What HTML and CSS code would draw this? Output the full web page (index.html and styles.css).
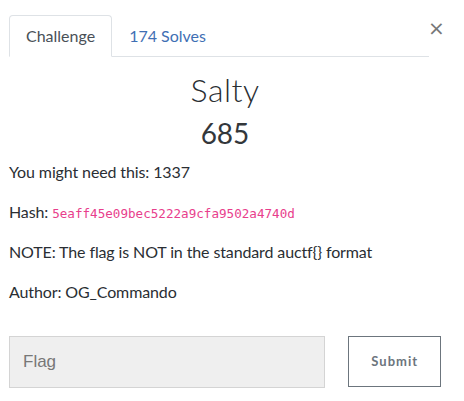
FILE: index.html
```html
<!DOCTYPE html>
<html>
<head>
<meta charset="utf-8">
<link rel="stylesheet" href="styles.css">
</head>
<body>
<div class="modal">
  <button class="close" type="button">×</button>
  <ul class="tabs">
    <li class="tab active">Challenge</li>
    <li class="tab link">174 Solves</li>
  </ul>
  <div class="body">
    <h2 class="title">Salty</h2>
    <h3 class="value">685</h3>
    <div class="desc">
      <p>You might need this: 1337</p>
      <p>Hash: <code>5eaff45e09bec5222a9cfa9502a4740d</code></p>
      <p>NOTE: The flag is NOT in the standard auctf{} format</p>
      <p>Author: OG_Commando</p>
    </div>
    <div class="submit-row">
      <input class="flag" type="text" placeholder="Flag">
      <button class="submit" type="button">Submit</button>
    </div>
  </div>
</div>
</body>
</html>
```

FILE: styles.css
```css
html, body {
  margin: 0;
  padding: 0;
  background: #fff;
}
body {
  font-family: Lato, "Open Sans", sans-serif;
  font-size: 16px;
  line-height: 1.5;
  color: #2a2e33;
}
.modal {
  position: relative;
  width: 432px;
  padding: 15px 0 0 9px;
}
.close {
  position: absolute;
  top: 13px;
  left: 428px;
  width: 16px;
  height: 30px;
  padding: 0;
  border: 0;
  background: transparent;
  font-family: "DejaVu Sans", sans-serif;
  font-size: 20px;
  font-weight: 400;
  line-height: 30px;
  color: #777;
  cursor: pointer;
}
.tabs {
  list-style: none;
  margin: 0;
  padding: 0;
  display: flex;
  width: 420px;
  border-bottom: 1px solid #dee2e6;
}
.tab {
  padding: 8px 16px;
  border: 1px solid transparent;
  border-top-left-radius: 4px;
  border-top-right-radius: 4px;
  margin-bottom: -1px;
  line-height: 24px;
}
.tab.active {
  color: #495057;
  background: #fff;
  border-color: #dee2e6 #dee2e6 #fff;
}
.tab.link {
  color: #3f6fb4;
}
.body {
  padding-top: 14px;
}
.title {
  margin: 0 0 8px;
  text-align: center;
  font-size: 32px;
  font-weight: 300;
  line-height: 1.2;
  letter-spacing: 0.5px;
}
.value {
  margin: 0 0 9px;
  text-align: center;
  font-size: 28px;
  font-weight: 400;
  line-height: 1.2;
  color: #33373b;
}
.desc p {
  margin: 0 0 16px;
  letter-spacing: -0.12px;
}
code {
  font-family: "DejaVu Sans Mono", "Liberation Mono", monospace;
  font-size: 12.6px;
  letter-spacing: 0;
  color: #e83e8c;
}
.submit-row {
  display: flex;
  align-items: flex-start;
  gap: 23px;
  padding-top: 16px;
}
.flag {
  box-sizing: border-box;
  width: 318px;
  height: 52px;
  margin: 0;
  padding: 0 13px;
  border: 1px solid #d4d4d4;
  background: #efefef;
  font-family: "Liberation Sans", Arial, sans-serif;
  font-size: 17px;
  color: #495057;
  outline: none;
}
.flag::placeholder {
  color: #777;
}
.submit {
  box-sizing: border-box;
  width: 93px;
  height: 51px;
  margin: 0;
  padding: 0;
  border: 1px solid #6c757d;
  background: #fff;
  font-family: Lato, sans-serif;
  font-size: 13px;
  font-weight: 700;
  letter-spacing: 1px;
  color: #6c757d;
}
```
